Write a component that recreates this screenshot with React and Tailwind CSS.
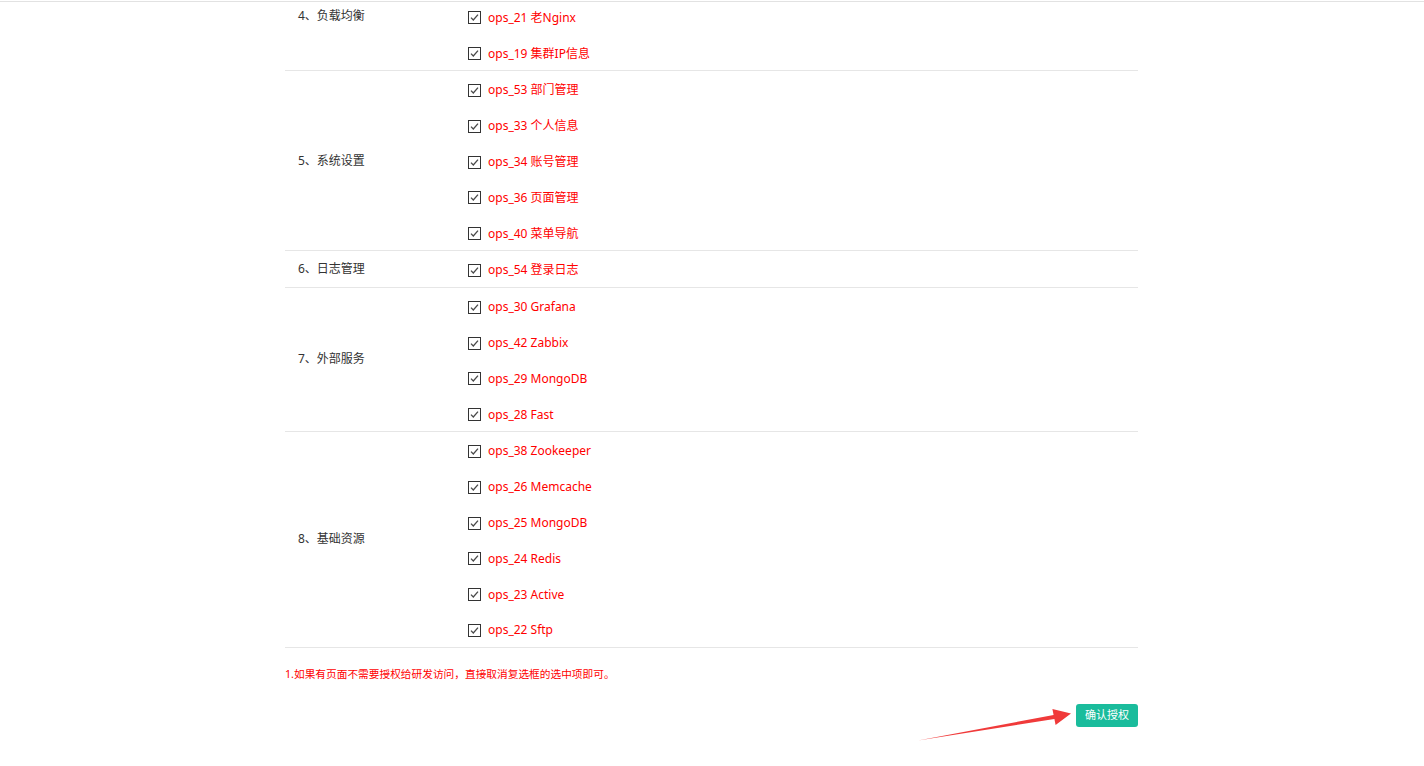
import React from "react";

const groups = [
  { label: "4、负载均衡", hidden: 1, items: ["ops_20 Nginx", "ops_21 老Nginx", "ops_19 集群IP信息"] },
  {
    label: "5、系统设置",
    items: ["ops_53 部门管理", "ops_33 个人信息", "ops_34 账号管理", "ops_36 页面管理", "ops_40 菜单导航"],
  },
  { label: "6、日志管理", items: ["ops_54 登录日志"] },
  { label: "7、外部服务", items: ["ops_30 Grafana", "ops_42 Zabbix", "ops_29 MongoDB", "ops_28 Fast"] },
  {
    label: "8、基础资源",
    items: [
      "ops_38 Zookeeper",
      "ops_26 Memcache",
      "ops_25 MongoDB",
      "ops_24 Redis",
      "ops_23 Active",
      "ops_22 Sftp",
    ],
  },
];

function CheckBox() {
  return (
    <span className="flex h-[13px] w-[13px] shrink-0 items-center justify-center border border-[#333] bg-white">
      <svg width="11" height="11" viewBox="0 0 11 11">
        <path d="M2 5.6 L4.3 8 L9 2.6" fill="none" stroke="#4a4a4a" strokeWidth="1.3" />
      </svg>
    </span>
  );
}

export default function App() {
  return (
    <div
      className="relative h-[766px] w-full overflow-hidden bg-white"
      style={{ fontFamily: '"Noto Sans", "Noto Sans CJK SC", sans-serif' }}
    >
      <div className="ml-[285px] mt-[-37.3px] w-[853px]">
        {groups.map((g, gi) => (
          <div key={gi} className="flex border-b border-[#e6e6e6]">
            <div className="flex w-[170px] shrink-0 items-center pl-[13px] text-[12px] text-[#333]">
              {g.label}
            </div>
            <div className="flex flex-col pl-[13px]">
              {g.items.map((it, ii) => (
                <div
                  key={ii}
                  className={
                    ii < (g.hidden || 0)
                      ? "invisible flex h-[35.8px] items-center gap-[7px] pt-[3px]"
                      : "flex h-[35.8px] items-center gap-[7px] pt-[3px]"
                  }
                >
                  <CheckBox />
                  <span className="text-[12px] leading-none text-[#ff0000]">{it}</span>
                </div>
              ))}
            </div>
          </div>
        ))}
        <div className="mt-[18px] text-[10.7px] leading-[16px] text-[#ff0000]">
          1.如果有页面不需要授权给研发访问，直接取消复选框的选中项即可。
        </div>
        <div className="mt-[22px] flex justify-end">
          <button className="flex h-[23px] w-[62px] items-center justify-center rounded-[3px] bg-[#1abc9c] text-[11px] text-white">
            确认授权
          </button>
        </div>
      </div>

      <div className="absolute left-0 right-0 top-[1px] h-px bg-[#e2e2e2]" />

      <svg
        className="pointer-events-none absolute left-0 top-0"
        width="1424"
        height="766"
        viewBox="0 0 1424 766"
      >
        <polygon
          points="918,740.5 1053.6,715 1052.4,709 1071,713.6 1055.6,725 1054.4,719"
          fill="#f03a3a"
        />
      </svg>
    </div>
  );
}
